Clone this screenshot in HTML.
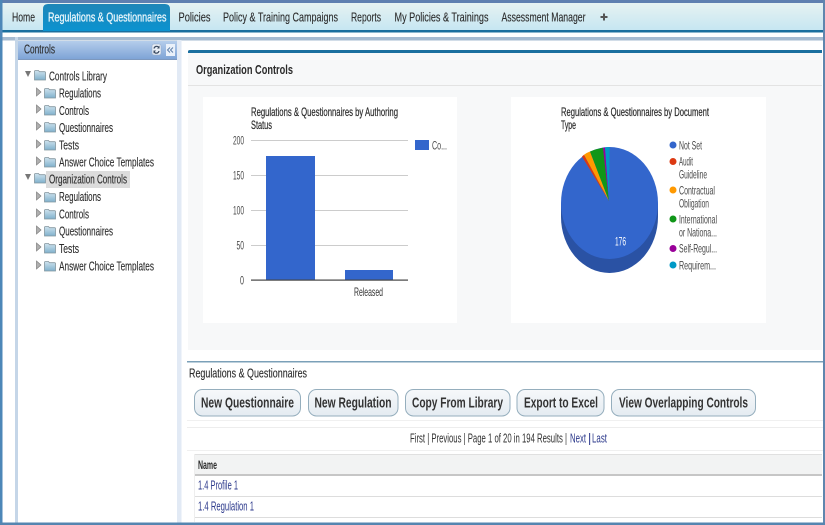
<!DOCTYPE html>
<html><head><meta charset="utf-8"><style>
html,body{margin:0;padding:0;width:825px;height:525px;overflow:hidden;background:#fff}
svg{display:block;filter:blur(.3px)}
text{font-family:"Liberation Sans",sans-serif;fill:#2b2b2b}
.t{font-size:13px;stroke:#2b2b2b;stroke-width:.12}
.g{fill:#4a4a4a}
.l{fill:#2d3a8c}
</style></head><body>
<svg width="825" height="525" viewBox="0 0 825 525" xmlns="http://www.w3.org/2000/svg">
<defs>
<linearGradient id="nav" x1="0" y1="0" x2="0" y2="1"><stop offset="0" stop-color="#e6f2f2"/><stop offset="1" stop-color="#c6e6f2"/></linearGradient>
<linearGradient id="tab" x1="0" y1="0" x2="0" y2="1"><stop offset="0" stop-color="#1f86b8"/><stop offset="1" stop-color="#0b93d0"/></linearGradient>
<linearGradient id="hd" x1="0" y1="0" x2="0" y2="1"><stop offset="0" stop-color="#b5cdeb"/><stop offset="1" stop-color="#7fa4d6"/></linearGradient>
<linearGradient id="btn" x1="0" y1="0" x2="0" y2="1"><stop offset="0" stop-color="#f6f8fa"/><stop offset="1" stop-color="#e4ebf1"/></linearGradient>
<linearGradient id="fd" x1="0" y1="0" x2="0" y2="1"><stop offset="0" stop-color="#cfe3ee"/><stop offset="1" stop-color="#7fb0cc"/></linearGradient>
<g id="folder"><path d="M.5 2.500q0-1 1-1h3l1 1.200h5q1 0 1 1v7.300h-11z" fill="url(#fd)" stroke="#84969f" stroke-width=".8"/></g>
<path id="ar" d="M.5 0l4.500 4-4.500 4z" fill="#b0b0b0" stroke="#7f7f7f" stroke-width=".7"/>
<path id="ad" d="M0 0h6l-3 6z" fill="#777"/>
</defs>

<rect width="825" height="525" fill="#fff"/>
<!-- nav -->
<rect x="0" y="3" width="825" height="27" fill="url(#nav)"/>
<rect x="0" y="0" width="825" height="3" fill="#5f7fb0"/>
<rect x="0" y="30" width="825" height="2.500" fill="#1b6f9e"/>
<path d="M43 31V9q0-5 5-5h117q5 0 5 5v22z" fill="url(#tab)"/>
<rect x="0" y="37" width="825" height="3.500" fill="#a6bbd1"/>
<text class="t" x="12" y="21.500" textLength="23" lengthAdjust="spacingAndGlyphs">Home</text>
<text class="t" x="48" y="21.500" textLength="118.500" lengthAdjust="spacingAndGlyphs" style="fill:#eaf6fb;stroke:#eaf6fb;stroke-width:.3">Regulations &amp; Questionnaires</text>
<text class="t" x="178.500" y="21.500" textLength="32" lengthAdjust="spacingAndGlyphs">Policies</text>
<text class="t" x="223" y="21.500" textLength="115" lengthAdjust="spacingAndGlyphs">Policy &amp; Training Campaigns</text>
<text class="t" x="351" y="21.500" textLength="30" lengthAdjust="spacingAndGlyphs">Reports</text>
<text class="t" x="394.500" y="21.500" textLength="94" lengthAdjust="spacingAndGlyphs">My Policies &amp; Trainings</text>
<text class="t" x="501.500" y="21.500" textLength="84" lengthAdjust="spacingAndGlyphs">Assessment Manager</text>
<path d="M604 13.500v7M600.500 17h7" stroke="#555" stroke-width="2"/>

<!-- left panel -->
<rect x="15" y="37" width="3" height="488" fill="#c5d6e8"/>
<rect x="177" y="40" width="4.500" height="485" fill="#e2eaf5"/>
<rect x="18" y="41" width="159" height="18" fill="url(#hd)"/>
<rect x="18" y="59" width="159" height="1" fill="#7d98bd"/>
<text class="t" x="24" y="53.500" textLength="31" lengthAdjust="spacingAndGlyphs">Controls</text>
<rect x="152" y="44" width="9" height="11" rx="2" fill="#e8eef6" stroke="#90a8c8" stroke-width=".5"/>
<path d="M154 48.500a2.700 2.700 0 0 1 5-.8M159 51a2.700 2.700 0 0 1-5 .8" fill="none" stroke="#3a4a60" stroke-width="1.200"/>
<path d="M159.500 45.500v3h-2.500zM153.500 53.500v-3h2.500z" fill="#3a4a60"/>
<rect x="166" y="44" width="9" height="12" fill="#eaf1fa"/>
<path d="M170 47.500l-2.500 2.500 2.500 2.500M173 47.500l-2.500 2.500 2.500 2.500" fill="none" stroke="#5f7fa8" stroke-width="1"/>

<rect x="46" y="171" width="84" height="17" fill="#dcdcdc"/>
<use href="#ad" x="25" y="71"/><use href="#folder" x="34" y="69"/>
<text class="t" x="49" y="80.500" textLength="58" lengthAdjust="spacingAndGlyphs">Controls Library</text>
<use href="#ar" x="36" y="88"/><use href="#folder" x="44" y="87"/>
<text class="t" x="59" y="97.500" textLength="42" lengthAdjust="spacingAndGlyphs">Regulations</text>
<use href="#ar" x="36" y="105"/><use href="#folder" x="44" y="104"/>
<text class="t" x="59" y="115" textLength="30" lengthAdjust="spacingAndGlyphs">Controls</text>
<use href="#ar" x="36" y="122"/><use href="#folder" x="44" y="121"/>
<text class="t" x="59" y="132" textLength="54" lengthAdjust="spacingAndGlyphs">Questionnaires</text>
<use href="#ar" x="36" y="140"/><use href="#folder" x="44" y="139"/>
<text class="t" x="59" y="149.500" textLength="20" lengthAdjust="spacingAndGlyphs">Tests</text>
<use href="#ar" x="36" y="157"/><use href="#folder" x="44" y="156"/>
<text class="t" x="59" y="166.500" textLength="95" lengthAdjust="spacingAndGlyphs">Answer Choice Templates</text>
<use href="#ad" x="25" y="174"/><use href="#folder" x="34" y="172"/>
<text class="t" x="49" y="183.500" textLength="78" lengthAdjust="spacingAndGlyphs">Organization Controls</text>
<use href="#ar" x="36" y="192"/><use href="#folder" x="44" y="191"/>
<text class="t" x="59" y="201" textLength="42" lengthAdjust="spacingAndGlyphs">Regulations</text>
<use href="#ar" x="36" y="209"/><use href="#folder" x="44" y="208"/>
<text class="t" x="59" y="218.500" textLength="30" lengthAdjust="spacingAndGlyphs">Controls</text>
<use href="#ar" x="36" y="226"/><use href="#folder" x="44" y="225"/>
<text class="t" x="59" y="235.500" textLength="54" lengthAdjust="spacingAndGlyphs">Questionnaires</text>
<use href="#ar" x="36" y="243"/><use href="#folder" x="44" y="242"/>
<text class="t" x="59" y="253" textLength="20" lengthAdjust="spacingAndGlyphs">Tests</text>
<use href="#ar" x="36" y="261"/><use href="#folder" x="44" y="260"/>
<text class="t" x="59" y="270.500" textLength="95" lengthAdjust="spacingAndGlyphs">Answer Choice Templates</text>

<!-- main top -->
<rect x="188" y="53" width="634" height="297" fill="#f7f8f9"/>
<path d="M188 53v-1.500q0-1.500 2-1.500h632v3z" fill="#1a6f9f"/>
<rect x="188" y="85" width="634" height="1" fill="#e3e3e3"/>
<text x="196" y="74" textLength="97" lengthAdjust="spacingAndGlyphs" font-size="13" font-weight="bold" style="fill:#2a2a2a">Organization Controls</text>

<!-- bar chart -->
<rect x="203" y="97" width="254" height="226" fill="#fff"/>
<text x="251" y="116" textLength="147" lengthAdjust="spacingAndGlyphs" font-size="12" stroke="#333" stroke-width=".25">Regulations &amp; Questionnaires by Authoring</text>
<text x="251" y="129" textLength="21" lengthAdjust="spacingAndGlyphs" font-size="12" stroke="#333" stroke-width=".25">Status</text>
<g fill="#ccc"><rect x="251" y="140" width="157" height="1"/><rect x="251" y="175" width="157" height="1"/><rect x="251" y="210" width="157" height="1"/><rect x="251" y="245" width="157" height="1"/></g>
<g font-size="12"><text class="g" x="233" y="144.500" textLength="11" lengthAdjust="spacingAndGlyphs">200</text>
<text class="g" x="233" y="179.500" textLength="11" lengthAdjust="spacingAndGlyphs">150</text>
<text class="g" x="233" y="214.500" textLength="11" lengthAdjust="spacingAndGlyphs">100</text>
<text class="g" x="236.500" y="249.500" textLength="7.500" lengthAdjust="spacingAndGlyphs">50</text>
<text class="g" x="240" y="284.500" textLength="4" lengthAdjust="spacingAndGlyphs">0</text></g>
<rect x="266" y="156" width="49" height="124" fill="#3366cc"/>
<rect x="345" y="270" width="48" height="10" fill="#3366cc"/>
<rect x="251" y="279.500" width="157" height="1.200" fill="#444"/>
<text x="354" y="296" textLength="29" lengthAdjust="spacingAndGlyphs" font-size="12" style="fill:#333">Released</text>
<rect x="415" y="140" width="14" height="10" fill="#3366cc"/>
<text class="g" x="432" y="149.500" textLength="15" lengthAdjust="spacingAndGlyphs" font-size="12">Co...</text>

<!-- pie chart -->
<rect x="511" y="97" width="255" height="226" fill="#fff"/>
<text x="561" y="116" textLength="148" lengthAdjust="spacingAndGlyphs" font-size="12" stroke="#333" stroke-width=".25">Regulations &amp; Questionnaires by Document</text>
<text x="561" y="129" textLength="15" lengthAdjust="spacingAndGlyphs" font-size="12" stroke="#333" stroke-width=".25">Type</text>
<path d="M561 203v14a48.500 56 0 0 0 97 0v-14z" fill="#2a52a4"/>
<ellipse cx="609.500" cy="203" rx="48.500" ry="56" fill="#3366cc"/>
<path d="M609 201L582 156.500L584 154.700z" fill="#dc3912"/>
<path d="M609 201L584 154.700Q586.500 152.800 590 151.500z" fill="#ff9900"/>
<path d="M609 201L590 151.500Q596 149 603 147.800z" fill="#109618"/>
<path d="M609 201L603 147.800L605 147.500z" fill="#990099"/>
<path d="M609 201L605 147.500Q607 147 609.500 147z" fill="#0099c6"/>
<text x="615" y="245.500" textLength="11" lengthAdjust="spacingAndGlyphs" font-size="12" style="fill:#fff">176</text>
<circle cx="673" cy="145" r="3.500" fill="#3366cc"/>
<circle cx="673" cy="161.500" r="3.500" fill="#dc3912"/>
<circle cx="673" cy="190" r="3.500" fill="#ff9900"/>
<circle cx="673" cy="219" r="3.500" fill="#109618"/>
<circle cx="673" cy="248.500" r="3.500" fill="#990099"/>
<circle cx="673" cy="265" r="3.500" fill="#0099c6"/>
<g font-size="12">
<text class="g" x="679" y="149.500" textLength="23" lengthAdjust="spacingAndGlyphs">Not Set</text>
<text class="g" x="679" y="165.500" textLength="14" lengthAdjust="spacingAndGlyphs">Audit</text>
<text class="g" x="679" y="178.500" textLength="28" lengthAdjust="spacingAndGlyphs">Guideline</text>
<text class="g" x="679" y="194.500" textLength="36" lengthAdjust="spacingAndGlyphs">Contractual</text>
<text class="g" x="679" y="207.500" textLength="30" lengthAdjust="spacingAndGlyphs">Obligation</text>
<text class="g" x="679" y="223.500" textLength="38" lengthAdjust="spacingAndGlyphs">International</text>
<text class="g" x="679" y="236.500" textLength="38" lengthAdjust="spacingAndGlyphs">or Nationa...</text>
<text class="g" x="679" y="252.500" textLength="38" lengthAdjust="spacingAndGlyphs">Self-Regul...</text>
<text class="g" x="679" y="269.500" textLength="37" lengthAdjust="spacingAndGlyphs">Requirem...</text>
</g>

<!-- bottom section -->
<rect x="187" y="361" width="638" height="1.500" fill="#7ba0b8"/>
<text class="t" x="189" y="377.500" textLength="118" lengthAdjust="spacingAndGlyphs">Regulations &amp; Questionnaires</text>
<g fill="url(#btn)" stroke="#95aebd" stroke-width="1">
<rect x="194.500" y="389.500" width="106" height="26.500" rx="8"/>
<rect x="308.500" y="389.500" width="89.500" height="26.500" rx="8"/>
<rect x="405.500" y="389.500" width="104.500" height="26.500" rx="8"/>
<rect x="517" y="389.500" width="87" height="26.500" rx="8"/>
<rect x="611.500" y="389.500" width="144" height="26.500" rx="8"/>
</g>
<g font-size="15" style="font-weight:bold">
<text x="201" y="407.500" textLength="93" lengthAdjust="spacingAndGlyphs" style="fill:#333">New Questionnaire</text>
<text x="314.500" y="407.500" textLength="77" lengthAdjust="spacingAndGlyphs" style="fill:#333">New Regulation</text>
<text x="412" y="407.500" textLength="91" lengthAdjust="spacingAndGlyphs" style="fill:#333">Copy From Library</text>
<text x="524" y="407.500" textLength="74" lengthAdjust="spacingAndGlyphs" style="fill:#333">Export to Excel</text>
<text x="619" y="407.500" textLength="129" lengthAdjust="spacingAndGlyphs" style="fill:#333">View Overlapping Controls</text>
</g>
<rect x="187" y="420" width="638" height="1" fill="#f0f0f0"/>
<rect x="187" y="427" width="638" height="1" fill="#ededed"/>
<rect x="187" y="450" width="638" height="1" fill="#f0f0f0"/>
<g font-size="12.500">
<text x="410" y="442.500" textLength="157" lengthAdjust="spacingAndGlyphs" style="fill:#333">First | Previous | Page 1 of 20 in 194 Results |</text>
<text class="l" x="570" y="442.500" textLength="16" lengthAdjust="spacingAndGlyphs">Next</text>
<text x="588" y="442.500" style="fill:#2d3a8c">|</text>
<text class="l" x="592" y="442.500" textLength="15" lengthAdjust="spacingAndGlyphs">Last</text>
</g>

<rect x="194" y="454" width="628" height="20" fill="#f2f3f3"/>
<rect x="194" y="454" width="628" height="1" fill="#e0e0e0"/>
<rect x="194" y="474" width="628" height="2" fill="#c6c6c6"/>
<rect x="194" y="496" width="628" height="1" fill="#ddd"/>
<rect x="194" y="517" width="628" height="1" fill="#ddd"/>
<rect x="194" y="454" width="1" height="68" fill="#eee"/>
<text x="198" y="469" textLength="19" lengthAdjust="spacingAndGlyphs" font-size="12" font-weight="bold">Name</text>
<text class="l" x="198" y="489.500" textLength="40" lengthAdjust="spacingAndGlyphs" font-size="12.500">1.4 Profile 1</text>
<text class="l" x="198" y="510.500" textLength="56" lengthAdjust="spacingAndGlyphs" font-size="12.500">1.4 Regulation 1</text>

<!-- page frame -->
<rect x="0" y="0" width="2.500" height="525" fill="#4d87b8"/>
<rect x="823" y="0" width="2" height="525" fill="#5f86ae"/>
<rect x="0" y="522.500" width="825" height="2.500" fill="#5585b0"/>
</svg>
</body></html>
